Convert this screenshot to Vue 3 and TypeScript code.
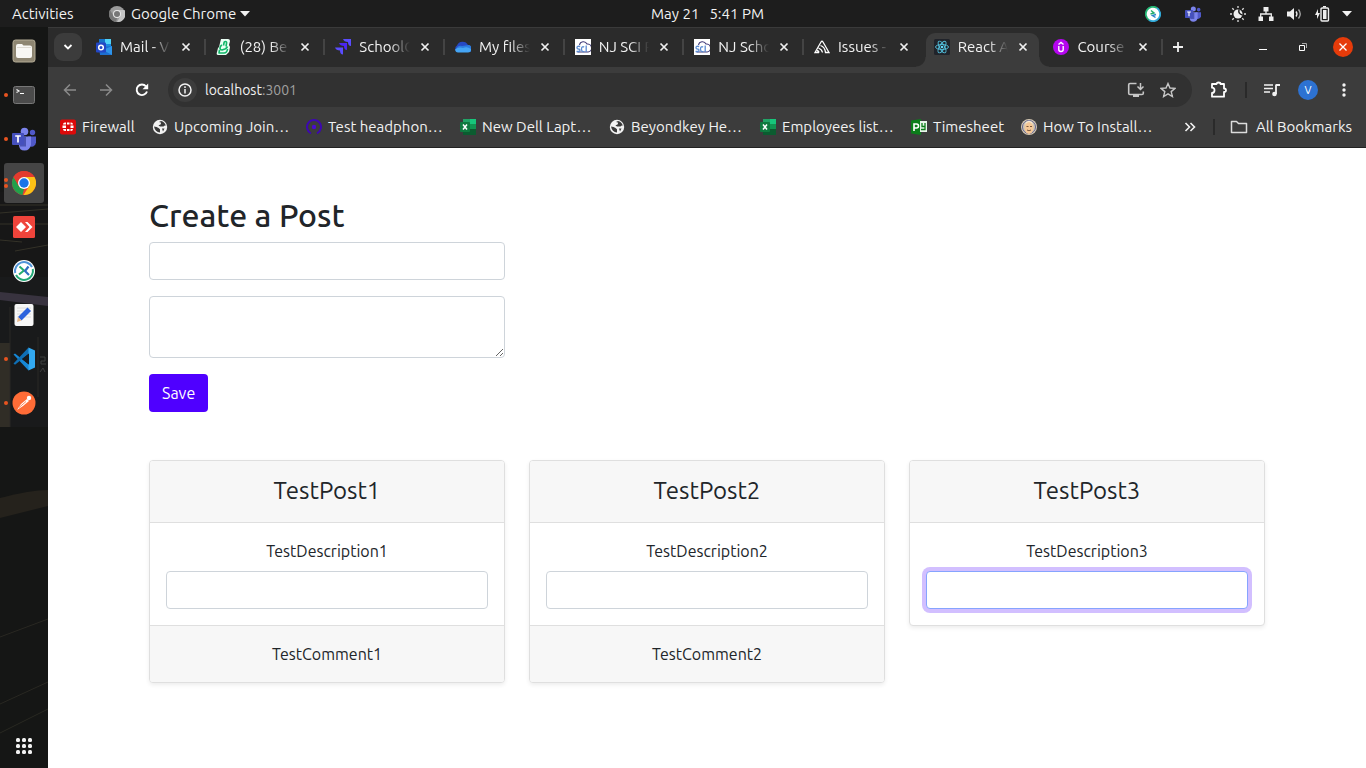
<script setup lang="ts">
import { ref } from 'vue'

interface Tab { icon: string; title: string; active?: boolean }
interface Bookmark { icon: string; title: string }
interface DockApp { icon: string; name: string; dots: number; focused?: boolean }
interface Post { id: number; title: string; description: string; comment?: string; focused?: boolean }

const tabs: Tab[] = [
  { icon: 'outlook', title: 'Mail - V' },
  { icon: 'stack', title: '(28) Be' },
  { icon: 'jira', title: 'SchoolC' },
  { icon: 'cloud', title: 'My files' },
  { icon: 'sci', title: 'NJ SCI P' },
  { icon: 'sci', title: 'NJ Scho' },
  { icon: 'sentry', title: 'Issues -' },
  { icon: 'react', title: 'React A', active: true },
  { icon: 'udemy', title: 'Course' },
]

const bookmarks: Bookmark[] = [
  { icon: 'firewall', title: 'Firewall' },
  { icon: 'globe', title: 'Upcoming Join…' },
  { icon: 'headphone', title: 'Test headphon…' },
  { icon: 'excel', title: 'New Dell Lapt…' },
  { icon: 'globe', title: 'Beyondkey He…' },
  { icon: 'excel', title: 'Employees list…' },
  { icon: 'project', title: 'Timesheet' },
  { icon: 'face', title: 'How To Install…' },
]

const apps: DockApp[] = [
  { icon: 'files', name: 'Files', dots: 0 },
  { icon: 'terminal', name: 'Terminal', dots: 1 },
  { icon: 'teams', name: 'Teams', dots: 1 },
  { icon: 'chrome', name: 'Google Chrome', dots: 2, focused: true },
  { icon: 'anydesk', name: 'AnyDesk', dots: 0 },
  { icon: 'desktime', name: 'Time tracker', dots: 0 },
  { icon: 'editor', name: 'Text Editor', dots: 0 },
  { icon: 'code', name: 'Code', dots: 1 },
  { icon: 'postman', name: 'Postman', dots: 1 },
]

const posts: Post[] = [
  { id: 1, title: 'TestPost1', description: 'TestDescription1', comment: 'TestComment1' },
  { id: 2, title: 'TestPost2', description: 'TestDescription2', comment: 'TestComment2' },
  { id: 3, title: 'TestPost3', description: 'TestDescription3', focused: true },
]

const postTitle = ref('')
const postText = ref('')
</script>

<template>
  <svg class="sprite" aria-hidden="true">
    <symbol id="i-outlook" viewBox="0 0 16 16">
      <path d="M3 0h12v9H3z" fill="#1a8be0" /><path d="M9 0h6v5H9z" fill="#4fd0f7" /><path d="M3 0h6v5H3z" fill="#1672c9" />
      <path d="M3 8l13-1v9H4z" fill="#1d6fd0" /><path d="M16 7v9l-9-5z" fill="#2e94ea" />
      <rect y="3.500" width="10" height="10" rx="1" fill="#2347c5" /><circle cx="5" cy="8.500" r="2.300" fill="none" stroke="#fff" stroke-width="1.500" />
    </symbol>
    <symbol id="i-stack" viewBox="0 0 16 16">
      <path d="M5 0h7q2 0 2 2l-1 4 1 2-1 5-3 3H2q-2 0-1-3l1-4 1-1z" fill="#e9fff4" />
      <path d="M7.500 6.500L8 4q0-1.500 1.500-1.500t1 2L10 7.500M6 6q-2 1-2 3t2 2l3-1q2-1 2.500-2.500M3.500 11L3 14h5q3 0 3.500-4" fill="none" stroke="#10b668" stroke-width="1.600" stroke-linejoin="round" />
    </symbol>
    <symbol id="i-jira" viewBox="0 0 16 16">
      <path d="M16 0v7q-3 0-3-4-4 0-5-3z" fill="#5a4cff" /><path d="M12 4v7q-3 0-3-4-4 0-5-3z" fill="#4b27f2" /><path d="M8 8.500v7q-3 0-3-4-4 0-5-3z" fill="#5a4cff" />
    </symbol>
    <symbol id="i-cloud" viewBox="0 0 16 16">
      <path d="M3.500 13A3.500 3.500 0 0 1 2 6.500 6 6 0 0 1 13 6a4 4 0 0 1 2 7z" fill="#2649c4" />
      <path d="M1 10q2-4 6-3l7-1a4 4 0 0 1 1 7H3.500q-2 0-2.500-3z" fill="#2c7ce0" /><path d="M0 10.500q4-3 8-1.500 4-2 8 1 0 3.500-3 3.500H3q-2.500 0-3-3z" fill="#45a5f5" />
    </symbol>
    <symbol id="i-sci" viewBox="0 0 16 16">
      <rect width="16" height="16" fill="#fff" />
      <path d="M4.500 6a4 4 0 0 1 7.500-1 4 4 0 0 1 1 8H2.500" fill="none" stroke="#403a78" stroke-width="1.100" />
      <path d="M5.200 7.500Q2 6.700 2 8.500T4 10q2 1 0 2.500H1.500M9.200 8Q6.500 7 6.500 10t2.800 2.500M11.200 6.500v6.500" fill="none" stroke="#5a8bd2" stroke-width="1.300" />
    </symbol>
    <symbol id="i-sentry" viewBox="0 0 16 16">
      <path d="M5 13.500H1L7 3q1-1.500 2 0l6 10.500h-3.500Q11 8 6.500 6.500M4.500 9q3.500 1.500 4 4.500M3 11.500q2 .5 2 2" fill="none" stroke="#fff" stroke-width="1.300" />
    </symbol>
    <symbol id="i-react" viewBox="0 0 16 16">
      <rect width="16" height="16" rx="1.500" fill="#20232a" />
      <g fill="none" stroke="#53c1de" stroke-width=".9"><ellipse cx="8" cy="8" rx="6.500" ry="2.500" /><ellipse cx="8" cy="8" rx="6.500" ry="2.500" transform="rotate(60 8 8)" /><ellipse cx="8" cy="8" rx="6.500" ry="2.500" transform="rotate(120 8 8)" /></g>
      <circle cx="8" cy="8" r="1.300" fill="#61dafb" />
    </symbol>
    <symbol id="i-udemy" viewBox="0 0 16 16">
      <circle cx="8" cy="8" r="8" fill="#b505ef" /><path d="M5.500 5.500L8 3.500l2.500 2M5.800 7v3.500q0 2 2.200 2t2.200-2V7" fill="none" stroke="#fff" stroke-width="1.400" />
    </symbol>
    <symbol id="i-firewall" viewBox="0 0 16 16">
      <rect width="16" height="15" y=".5" rx="2" fill="#dc0a0a" />
      <path d="M3 5.500a2 2 0 0 1 2-2h1v2H3zM7 3.500h2.500v2H7zM10.500 3.500H11a2 2 0 0 1 2 2h-2.500zM2.500 6.500H6v2.500H2.500zM10.500 6.500h3v2.500h-3zM3 10h3v2H5a2 2 0 0 1-2-2zM7 10h2.500v2H7zM10.500 10H13a2 2 0 0 1-2 2h-.5z" fill="#fff" />
    </symbol>
    <symbol id="i-globe" viewBox="0 0 16 16">
      <circle cx="8" cy="8" r="7.200" fill="#f2f2f2" />
      <path d="M2 7.500q3 0 4.500 1.500T8 10v3.500q-5-.5-6-6zM7 3q2.500 0 2 1.500T7 6t1 1.500h3.500q1-1.500 2.300-1Q12.500 2.500 9 2zM10 9.500h2.500l-1.500 3z" fill="#3a3a3a" />
    </symbol>
    <symbol id="i-headphone" viewBox="0 0 16 16">
      <path d="M5 14.300A7 7 0 1 1 11 14.300" fill="none" stroke="#3d08b0" stroke-width="2" /><circle cx="8" cy="8" r="2.200" fill="#4a0bd0" />
    </symbol>
    <symbol id="i-excel" viewBox="0 0 16 16">
      <path d="M3 0h13v16H3z" fill="#107c41" /><path d="M3 0h7v5H3z" fill="#21a366" /><path d="M10 0h6v5h-6z" fill="#17c67b" /><path d="M10 5h6v5h-6z" fill="#109552" /><path d="M3 10h13v6H3z" fill="#0b5c30" />
      <rect y="3" width="10" height="10" rx="1" fill="#0f7a3f" /><path d="M3 5.500l4 5M7 5.500l-4 5" stroke="#fff" stroke-width="1.500" />
    </symbol>
    <symbol id="i-project" viewBox="0 0 16 16">
      <path d="M0 1.500L10 0v16L0 14.500z" fill="#0b7d1a" /><path d="M9 2h7v11H9z" fill="#e8f6ea" />
      <path d="M3 12V5h2.500q2 0 2 2t-2 2H3" fill="none" stroke="#fff" stroke-width="1.600" /><path d="M11 4v3.500h3V4M14 7.500v3h-4" fill="none" stroke="#0b7d1a" stroke-width="1.300" />
    </symbol>
    <symbol id="i-face" viewBox="0 0 16 16">
      <circle cx="8" cy="8" r="8" fill="#d3c6b2" /><circle cx="8" cy="8" r="6.500" fill="none" stroke="#5e6292" /><ellipse cx="8" cy="9" rx="4.200" ry="6" fill="#f5c796" />
      <path d="M4 6q4-6 8 0l-1-3-3-1.500L5 3z" fill="#f8ead1" /><path d="M5.500 7.500h2M9 7.500h2M6 11q2 1.500 4 0" fill="none" stroke="#6b4a32" stroke-width=".9" />
    </symbol>
    <symbol id="i-files" viewBox="0 0 24 24">
      <rect x="1" y="1" width="22" height="22" rx="2.500" fill="#8e8672" stroke="#b5ad97" /><path d="M4 7q0-2 2-2h4l1.500 1.500H18q2 0 2 2V17q0 2-2 2H6q-2 0-2-2z" fill="#f8f7f4" /><path d="M5 8.500h14" stroke="#dedbd3" />
    </symbol>
    <symbol id="i-terminal" viewBox="0 0 24 24">
      <rect x="1.500" y="3.500" width="21" height="17" rx="2" fill="#4b4b4b" stroke="#777" /><path d="M4.500 6.500l2.500 1.500-2.500 1.500M8 10.500h4" fill="none" stroke="#fff" stroke-width="1.100" />
    </symbol>
    <symbol id="i-teams" viewBox="0 0 24 24">
      <circle cx="20.500" cy="5.500" r="2.700" fill="#5059c9" /><circle cx="12.500" cy="4.500" r="3.800" fill="#7b83eb" /><path d="M16 9.500h8v6q-1 5-6 4z" fill="#5059c9" />
      <path d="M7 9.500h12v8q-1 6-6.500 6T7 18z" fill="#7b83eb" /><path d="M7 9.500h7v10H8z" fill="#4b54b4" />
      <rect y="6" width="12" height="12" rx="1" fill="#4550bd" /><path d="M3.200 9h5.600M6 9v6.500" stroke="#fff" stroke-width="1.700" />
    </symbol>
    <symbol id="i-chrome" viewBox="0 0 24 24">
      <circle cx="12" cy="12" r="12" fill="#ea4335" /><path d="M1.600 6L6.800 15 12 18l-1.500 5.900A12 12 0 0 1 1.600 6z" fill="#22a04b" />
      <path d="M12 6h10.400A12 12 0 0 1 11.500 24L17.200 15z" fill="#fbc116" /><path d="M1.600 6A12 12 0 0 1 22.400 6H12L6.800 15z" fill="#e33b2e" />
      <circle cx="12" cy="12" r="6" fill="#fff" /><circle cx="12" cy="12" r="4.700" fill="#1a73e8" />
    </symbol>
    <symbol id="i-anydesk" viewBox="0 0 24 24">
      <rect x="1" y="1" width="22" height="22" rx="1.500" fill="#ef443b" /><path d="M4 12l5-5 5 5-5 5zM13 7h2.500l5 5-5 5H13l4.500-5z" fill="#fff" />
    </symbol>
    <symbol id="i-desktime" viewBox="0 0 24 24">
      <circle cx="12" cy="12" r="11" fill="#fff" /><path d="M3.200 14A9 9 0 0 1 20 8" fill="none" stroke="#4f94d8" stroke-width="2" /><path d="M20.800 10A9 9 0 0 1 4 16" fill="none" stroke="#22a876" stroke-width="2" />
      <path d="M7.500 7.500l4.500 4-5 4M10 9.500" fill="none" stroke="#23ad6d" stroke-width="2" /><path d="M16.500 7.500l-3.500 4.500 4 4" fill="none" stroke="#2f6fc0" stroke-width="2.200" />
    </symbol>
    <symbol id="i-tracker" viewBox="0 0 16 16">
      <circle cx="8" cy="8" r="7.500" fill="#fff" /><path d="M4 14A7 7 0 0 1 12 2" fill="none" stroke="#22b573" stroke-width="1.800" /><path d="M12 2A7 7 0 0 1 4 14" fill="none" stroke="#2fa8d8" stroke-width="1.800" />
      <path d="M6 4.500L9 7 5.500 8" fill="none" stroke="#23ad6d" stroke-width="1.500" /><path d="M11 8.500L7.500 9.500l3 2" fill="none" stroke="#2c86c8" stroke-width="1.500" />
    </symbol>
    <symbol id="i-editor" viewBox="0 0 24 24">
      <rect x="2.500" y="1" width="19" height="22" rx="2" fill="#f7f7f7" /><path d="M5 5h14M5 8h14M5 11h14M5 14h14" stroke="#dcdcdc" /><path d="M15.500 4.500l3.500 3.500-9.500 9.500-3.500-3.500z" fill="#2b62dd" /><path d="M6 14l3.500 3.500L5 19z" fill="#e8b98b" />
    </symbol>
    <symbol id="i-code" viewBox="0 0 24 24">
      <path d="M1.500 7.500L3 6.500l15 12-1.500 5z" fill="#1688d6" /><path d="M1.500 16.500L3 17.800l15-12L16.500.5z" fill="#0f6fb5" /><path d="M16.500.5L23 3.500v17l-6.500 3z" fill="#32a9f1" /><path d="M17 6.500v11L10 12z" fill="#171a1c" />
    </symbol>
    <symbol id="i-postman" viewBox="0 0 24 24">
      <circle cx="12" cy="12" r="11.500" fill="#ff6c37" /><circle cx="17" cy="7" r="2.200" fill="#fff" /><path d="M15 8l2 2-6 5-6 4 4-6z" fill="#fff" /><path d="M7 16.500l7-6" stroke="#ff6c37" stroke-width=".8" />
    </symbol>
  </svg>

  <div class="desktop">
    <header class="panel">
      <button class="activities" type="button">Activities</button>
      <button class="app-menu" type="button">
        <svg class="i16" viewBox="0 0 16 16" aria-hidden="true"><circle cx="8" cy="8" r="8" fill="#9b9b9b" /><path d="M8 4h7.500A8 8 0 0 1 8 16l3.500-6z" fill="#c4c4c4" /><path d="M1 4l3.500 6L8 12l-1 4A8 8 0 0 1 1 4z" fill="#777" /><circle cx="8" cy="8" r="4" fill="#e8e8e8" /><circle cx="8" cy="8" r="3" fill="#777" /></svg>
        <span>Google Chrome</span>
        <svg class="caret" viewBox="0 0 10 6" aria-hidden="true"><path d="M0 0h10L5 5.500z" fill="#f2f2f2" /></svg>
      </button>
      <button class="clock" type="button"><span>May 21</span><span>5:41 PM</span></button>
      <div class="tray">
        <svg class="i16 t-desk"><use href="#i-tracker" /></svg>
        <svg class="i16 t-teams"><use href="#i-teams" /></svg>
        <svg class="i16" viewBox="0 0 16 16"><circle cx="8" cy="8" r="4.500" fill="#eee" /><path d="M9 3.500Q8 8 12.500 9" fill="none" stroke="#1d1d1d" stroke-width="1.500" /><path d="M8 0v2M8 14v2M0 8h2M14 8h2M2.300 2.300l1.500 1.500M12.200 12.200l1.500 1.500M2.300 13.700l1.500-1.500M12.200 3.800l1.500-1.500" stroke="#ddd" stroke-width="1.300" /></svg>
        <svg class="i16" viewBox="0 0 16 16"><path d="M5.500 1h5v4.500h-5zM.5 10.500h4.500V15H.5zM11 10.500h4.500V15H11z" fill="#eee" /><path d="M8 5v3M2.700 11V8h10.600v3" fill="none" stroke="#eee" stroke-width="1.300" /></svg>
        <svg class="i16" viewBox="0 0 16 16"><path d="M1 5.500h3L8 2v12l-4-3.500H1z" fill="#eee" /><path d="M10 5.500q2 2.500 0 5" fill="none" stroke="#eee" stroke-width="1.300" /><path d="M12.500 3.500q3.500 4.500 0 9" fill="none" stroke="#aaa" stroke-width="1.300" /></svg>
        <svg class="i16" viewBox="0 0 16 16"><path d="M4 3L1 9h2v4l3-6H4zM9 0h3v1.500H9z" fill="#eee" /><rect x="7" y="2" width="7.500" height="13" rx="1" fill="none" stroke="#eee" stroke-width="1.400" /><path d="M9 4h3.500v9H9z" fill="#eee" /></svg>
        <svg class="caret" viewBox="0 0 10 6"><path d="M0 0h10L5 5.500z" fill="#f2f2f2" /></svg>
      </div>
    </header>

    <div class="workspace">
      <nav class="dock" aria-label="Dock">
        <svg class="wallpaper" viewBox="0 0 48 741" preserveAspectRatio="none" aria-hidden="true">
          <rect width="48" height="741" fill="#151615" />
          <path d="M0 165h48v105H0z" fill="#171717" /><path d="M0 178h48M0 186l48-4M0 197h48M0 213l22 2M15 224l33-6" stroke="#343228" />
          <path d="M0 250h48v150H0z" fill="#191a1b" /><path d="M0 265l48 5v9L0 273z" fill="#38333f" /><path d="M0 316h10v84H0z" fill="#302d26" /><path d="M10 280v120M38 310v60" stroke="#2a2927" />
          <path d="M0 471q30-8 48-8v16L0 491z" fill="#25221c" /><path d="M0 610l48-18M0 677l48-22M0 706l48-24" stroke="#292822" />
          <path d="M40 330h5v4h-4v3h5M40 345l3-4 2 4" fill="none" stroke="#3d3e3e" />
        </svg>
        <div class="apps">
          <button v-for="a in apps" :key="a.name" type="button" class="app" :class="{ focused: a.focused }" :aria-label="a.name">
            <span v-if="a.dots" class="dots"><i v-for="n in a.dots" :key="n" /></span>
            <svg class="i24"><use :href="'#i-' + a.icon" /></svg>
          </button>
        </div>
        <button type="button" class="app" aria-label="Show applications">
          <svg class="i16" viewBox="0 0 16 16" fill="#f2f2f2"><template v-for="r in 3" :key="r"><rect v-for="c in 3" :key="c" :x="c * 6 - 6" :y="r * 6 - 6" width="4" height="4" rx="1.500" /></template></svg>
        </button>
      </nav>

      <section class="browser">
        <div class="strip">
          <button type="button" class="search-tabs" aria-label="Search tabs"><svg class="i16" viewBox="0 0 16 16"><path d="M4.500 6L8 9.500 11.500 6" fill="none" stroke="#fff" stroke-width="1.800" /></svg></button>
          <div class="tabs">
            <div v-for="(t, i) in tabs" :key="i" class="tab" :class="{ active: t.active, before: tabs[i + 1]?.active }">
              <svg class="i16"><use :href="'#i-' + t.icon" /></svg>
              <span class="tab-title">{{ t.title }}</span>
              <button type="button" class="close" aria-label="Close tab"><svg class="i16" viewBox="0 0 16 16"><path d="M4.500 4.500l7 7M11.500 4.500l-7 7" stroke="#f0f0f0" stroke-width="1.700" /></svg></button>
            </div>
          </div>
          <button type="button" class="bare new-tab" aria-label="New tab"><svg class="i16" viewBox="0 0 16 16"><path d="M8 3v10M3 8h10" stroke="#f0f0f0" stroke-width="1.800" /></svg></button>
          <div class="window-controls">
            <button type="button" class="bare" aria-label="Minimize"><svg class="i16" viewBox="0 0 16 16"><path d="M4 10.500h8" stroke="#fff" /></svg></button>
            <button type="button" class="bare" aria-label="Restore"><svg class="i16" viewBox="0 0 16 16"><path d="M4.500 6.500h5v5h-5z" fill="none" stroke="#fff" /><path d="M7 4.500h4.500V9" fill="none" stroke="#aaa" /></svg></button>
            <button type="button" class="bare quit" aria-label="Close window"><svg class="i16" viewBox="0 0 16 16"><path d="M4.500 4.500l7 7M11.500 4.500l-7 7" stroke="#fff" stroke-width="1.300" /></svg></button>
          </div>
        </div>

        <div class="toolbar">
          <div class="nav-buttons">
            <button type="button" class="bare" aria-label="Back"><svg class="i16" viewBox="0 0 16 16"><path d="M14 8H3M8 2.500L2.500 8 8 13.500" fill="none" stroke="#8b8b8b" stroke-width="1.500" /></svg></button>
            <button type="button" class="bare" aria-label="Forward"><svg class="i16" viewBox="0 0 16 16"><path d="M2 8h11M8 2.500L13.500 8 8 13.500" fill="none" stroke="#8b8b8b" stroke-width="1.500" /></svg></button>
            <button type="button" class="bare" aria-label="Reload"><svg class="i16" viewBox="0 0 16 16"><path d="M13 9.500A5.300 5.300 0 1 1 12 4.300" fill="none" stroke="#fff" stroke-width="1.900" /><path d="M14.200 1.500v5.700H8.500z" fill="#fff" /></svg></button>
          </div>
          <div class="omnibox">
            <button type="button" class="info" aria-label="Site information"><svg class="i16" viewBox="0 0 16 16"><circle cx="8" cy="8" r="6" fill="none" stroke="#f2f2f2" stroke-width="1.500" /><path d="M8 7v4.500M8 4.300v1.600" stroke="#f2f2f2" stroke-width="1.500" /></svg></button>
            <span class="url">localhost<span>:3001</span></span>
            <button type="button" class="bare" aria-label="Install app"><svg class="i18" viewBox="0 0 18 18"><path d="M9.500 2.500H3q-1.300 0-1.300 1.300v8.400q0 1.300 1.300 1.300h12q1.300 0 1.300-1.300V10.500" fill="none" stroke="#c7c7c7" stroke-width="1.600" /><path d="M6 14h6v2H6z" fill="#c7c7c7" /><path d="M13.500 2v6M10.500 5.500l3 3 3-3" fill="none" stroke="#c7c7c7" stroke-width="1.500" /></svg></button>
            <button type="button" class="bare" aria-label="Bookmark this page"><svg class="i16" viewBox="0 0 16 16"><path d="M8 1.500l2 4.500 5 .4-3.800 3.200 1.200 4.900L8 11.900l-4.400 2.600 1.200-4.900L1 6.400 6 6z" fill="none" stroke="#c7c7c7" stroke-width="1.400" /></svg></button>
          </div>
          <div class="actions">
            <button type="button" class="bare" aria-label="Extensions"><svg class="i18" viewBox="0 0 18 18"><path d="M2 3h4.500q0-1.500 2-1.500t2 1.500h3.500v4.500q2 0 2 1.800T14 11v4.700H2V12q2.500 0 2.500-2.700T2 6.700z" fill="none" stroke="#fff" stroke-width="1.800" stroke-linejoin="round" /></svg></button>
            <i class="rule" />
            <button type="button" class="bare" aria-label="Media controls"><svg class="i16" viewBox="0 0 16 16"><path d="M0 3h9M0 6.500h9M0 10h6" stroke="#f2f2f2" stroke-width="1.600" /><path d="M12 2.500V12M12 3h4" stroke="#f2f2f2" stroke-width="1.800" /><circle cx="10.500" cy="12" r="2.300" fill="#f2f2f2" /></svg></button>
            <button type="button" class="avatar" aria-label="Profile">V</button>
            <button type="button" class="bare" aria-label="Menu"><svg class="i16" viewBox="0 0 16 16" fill="#f2f2f2"><circle cx="8" cy="3" r="1.700" /><circle cx="8" cy="8" r="1.700" /><circle cx="8" cy="13" r="1.700" /></svg></button>
          </div>
        </div>

        <div class="bookmarks">
          <div class="marks">
            <a v-for="b in bookmarks" :key="b.title" href="#"><svg class="i16"><use :href="'#i-' + b.icon" /></svg><span>{{ b.title }}</span></a>
          </div>
          <div class="more">
            <button type="button" class="bare" aria-label="More bookmarks"><svg class="i16" viewBox="0 0 16 16"><path d="M3.500 4l4 4-4 4M8.500 4l4 4-4 4" fill="none" stroke="#f2f2f2" stroke-width="1.600" /></svg></button>
            <i class="rule" />
            <a href="#"><svg class="i18" viewBox="0 0 18 18"><path d="M1.500 3.500h5l2 2h8v9h-15z" fill="none" stroke="#dcdcdc" stroke-width="1.500" stroke-linejoin="round" /></svg><span>All Bookmarks</span></a>
          </div>
        </div>

        <main class="page">
          <div class="container">
            <form class="create" @submit.prevent>
              <h2>Create a Post</h2>
              <input v-model="postTitle" class="field" type="text" aria-label="Post title">
              <textarea v-model="postText" class="field" rows="2" aria-label="Post description"></textarea>
              <button class="save" type="submit">Save</button>
            </form>
            <div class="cards">
              <article v-for="p in posts" :key="p.id" class="card">
                <h4>{{ p.title }}</h4>
                <div class="card-body">
                  <label :for="'comment-' + p.id">{{ p.description }}</label>
                  <input :id="'comment-' + p.id" class="field" :class="{ focus: p.focused }" type="text">
                </div>
                <footer v-if="p.comment">{{ p.comment }}</footer>
              </article>
            </div>
          </div>
        </main>
      </section>
    </div>
  </div>
</template>

<style>
body { margin: 0; background: #fff; }
</style>

<style scoped>
* { box-sizing: border-box; }
.sprite { position: absolute; width: 0; height: 0; }
.desktop { min-height: 100vh; display: flex; flex-direction: column; font-family: Ubuntu, "Noto Sans", sans-serif; font-size: 15px; color: #f2f2f2; }
button, input, textarea { font: inherit; color: inherit; }
button { border: 0; padding: 0; background: none; }
a { color: inherit; text-decoration: none; }
svg { display: block; flex: none; }
.i16 { width: 16px; height: 16px; }
.i18 { width: 18px; height: 18px; }
.i24 { width: 24px; height: 24px; }
.caret { width: 10px; height: 6px; }
.bare { display: flex; align-items: center; justify-content: center; flex: none; }

.panel { height: 27px; display: grid; grid-template-columns: 1fr auto 1fr; grid-template-areas: "left clock tray"; align-items: center; background: #1d1d1d; padding: 0 14px 0 12px; }
.activities { grid-area: left; justify-self: start; }
.app-menu { grid-area: left; justify-self: start; margin-left: 97px; display: flex; align-items: center; gap: 6px; }
.app-menu .caret { margin-left: -2px; }
.clock { grid-area: clock; display: flex; gap: 10px; margin-left: 51px; }
.tray { grid-area: tray; justify-self: end; display: flex; align-items: center; gap: 12px; margin-right: 1px; }
.tray .caret { margin-right: -1px; }
.t-desk { margin-right: 12px; }
.t-teams { margin-right: 17px; }

.workspace { flex: 1; display: flex; }
.dock { position: relative; width: 48px; flex: none; display: flex; flex-direction: column; justify-content: space-between; align-items: center; padding: 4px 0 2px; overflow: hidden; }
.wallpaper { position: absolute; inset: 0; width: 100%; height: 100%; }
.apps { display: flex; flex-direction: column; gap: 4px; }
.app { position: relative; width: 40px; height: 40px; display: flex; align-items: center; justify-content: center; border-radius: 3px; }
.app.focused { background: #454545; }
.dots { position: absolute; left: 0; top: 0; height: 100%; display: flex; flex-direction: column; justify-content: center; gap: 2px; }
.dots i { width: 4px; height: 4px; border-radius: 50%; background: #e95420; }

.browser { flex: 1; min-width: 0; display: flex; flex-direction: column; background: #3c3c3c; }
.strip { height: 40px; display: flex; align-items: center; background: #2b2b2b; border-top: 1px solid #3a3a3a; padding: 0 10px 1px 6px; }
.search-tabs { width: 28px; height: 28px; border-radius: 9px; background: #3c3c3c; display: flex; align-items: center; justify-content: center; flex: none; }
.tabs { display: flex; align-self: stretch; margin-left: 4px; padding-top: 5px; flex: 0 1 1077px; min-width: 0; }
.tab { flex: 1 1 0; min-width: 0; display: flex; align-items: center; padding: 0 12px 5px 10px; position: relative; }
.tab::after { content: ""; position: absolute; right: 0; top: 6px; width: 2px; height: 16px; background: #444; }
.tab.active::after, .tab.before::after { background: none; }
.tab-title { flex: 1; min-width: 0; margin: 0 6px 2px 8px; white-space: nowrap; mask-image: linear-gradient(90deg, #000 60%, transparent 98%); }
.tab.active { z-index: 1; }
.tab.active > * { z-index: 1; }
.tab.active::before { content: ""; position: absolute; inset: 0 -6px -1px -8px; background: radial-gradient(circle at 0 0, transparent 9px, #3c3c3c 10px) left bottom / 10px 10px no-repeat, radial-gradient(circle at 100% 0, transparent 9px, #3c3c3c 10px) right bottom / 10px 10px no-repeat; }
.tab.active::after { z-index: 0; inset: 0 4px -1px 2px; width: auto; height: auto; background: #3c3c3c; border-radius: 9px 9px 0 0; }
.close { flex: none; }
.new-tab { margin-left: 7px; }
.window-controls { display: flex; align-items: center; gap: 24px; margin-left: auto; }
.quit { width: 20px; height: 20px; border-radius: 50%; background: #e63b0a; margin-left: -2px; margin-right: 3px; }

.toolbar { height: 46px; display: flex; align-items: center; padding: 0 14px; }
.nav-buttons { display: flex; gap: 20px; }
.omnibox { flex: 1; height: 34px; margin: 0 18px; border-radius: 17px; background: #313131; display: flex; align-items: center; gap: 15px; padding: 0 16px 0 5px; }
.info { width: 24px; height: 24px; border-radius: 50%; background: #3c3c3c; display: flex; align-items: center; justify-content: center; }
.url { flex: 1; margin-left: -7px; font-size: 14px; }
.url span { color: #a0a0a0; }
.actions { display: flex; align-items: center; gap: 18px; }
.rule { width: 2px; height: 16px; background: #2a2a2a; }
.actions .rule { margin: 0 -1px; }
.avatar { width: 20px; height: 20px; border-radius: 50%; background: #2d72d2; font-size: 11px; color: #fff; }

.bookmarks { height: 35px; display: flex; align-items: center; padding: 0 14px 6px 12px; border-bottom: 1px solid #222; }
.marks { flex: 1; display: grid; grid-template-columns: 92px 154px 154px 149px 151px 151px 110px 1fr; }
.marks a, .more a { display: flex; align-items: center; gap: 6px; white-space: nowrap; }
.marks span, .more span { margin-bottom: 2px; }
.more { display: flex; align-items: center; gap: 15px; }
.more a { gap: 8px; }

.page { flex: 1; background: #fff; color: #212529; font-size: 16px; line-height: 24px; padding: 48px 0; }
.container { max-width: 1140px; margin: 0 auto; padding: 0 12px; }
.create { width: calc((100% - 48px) / 3); display: flex; flex-direction: column; align-items: flex-start; gap: 16px; }
h2 { margin: 0 0 -8px; font-size: 32px; line-height: 38px; font-weight: 550; }
.field { width: 100%; display: block; border: 1px solid #ced4da; border-radius: 4px; background: #fff; padding: 6px 12px; outline: 0; color: #212529; }
input.field { height: 38px; }
textarea.field { height: 62px; resize: vertical; }
.field.focus { border-color: #86a4fe; box-shadow: 0 0 0 4px #d2bfff; }
.save { background: #4f00ff; color: #fff; border-radius: 4px; height: 38px; padding: 0 13px; }
.cards { display: grid; grid-template-columns: repeat(3, 1fr); gap: 24px; align-items: start; margin-top: 48px; }
.card { border: 1px solid #dfdfdf; border-radius: 4px; box-shadow: 0 2px 4px rgba(0, 0, 0, .075); text-align: center; background: #fff; overflow: hidden; }
h4 { margin: 0; padding: 16px 16px 18px; font-size: 24px; line-height: 27px; font-weight: 400; background: #f7f7f7; border-bottom: 1px solid #dfdfdf; }
.card-body { padding: 16px; }
.card-body label { display: block; margin-bottom: 8px; }
.card footer { padding: 16px; background: #f7f7f7; border-top: 1px solid #dfdfdf; }
</style>
